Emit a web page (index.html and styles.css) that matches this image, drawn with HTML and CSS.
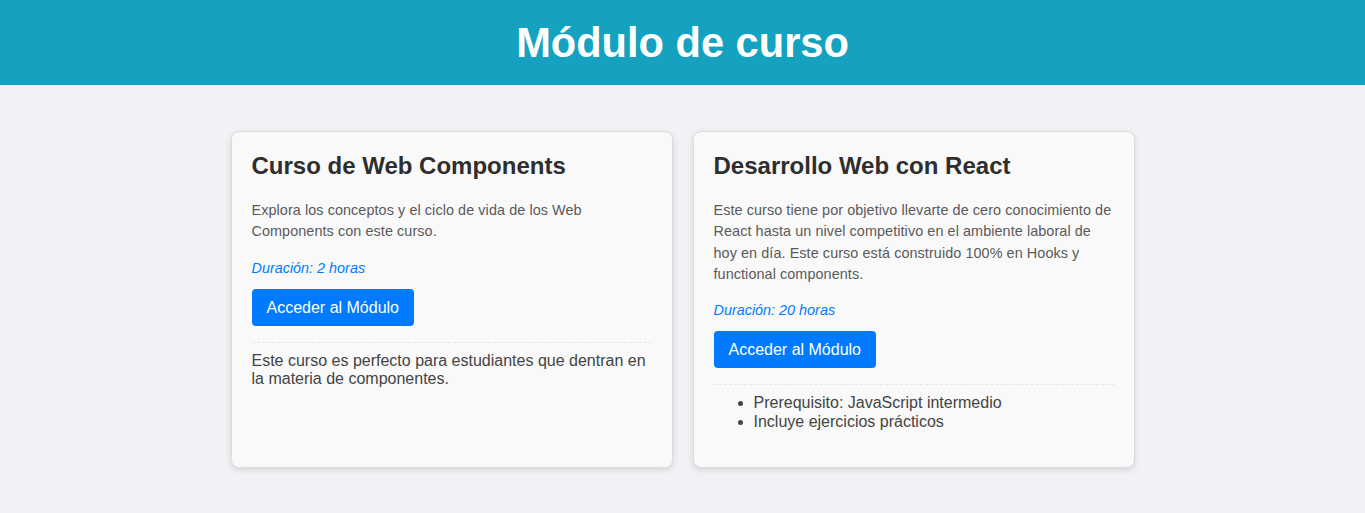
FILE: index.html
```html
<!DOCTYPE html>
<html lang="es">
<head>
<meta charset="utf-8">
<title>Módulo de curso</title>
<link rel="stylesheet" href="styles.css">
</head>
<body>
<header class="header">
  <h1 class="header-title">Módulo de curso</h1>
</header>
<main class="courses">
  <article class="card">
    <h2 class="card-title">Curso de Web Components</h2>
    <p class="card-desc">Explora los conceptos y el ciclo de vida de los Web Components con este curso.</p>
    <p class="card-duration">Duración: 2 horas</p>
    <button class="card-btn" type="button">Acceder al Módulo</button>
    <div class="card-extra">
      <p class="extra-text">Este curso es perfecto para estudiantes que dentran en la materia de componentes.</p>
    </div>
  </article>
  <article class="card">
    <h2 class="card-title">Desarrollo Web con React</h2>
    <p class="card-desc">Este curso tiene por objetivo llevarte de cero conocimiento de React hasta un nivel competitivo en el ambiente laboral de hoy en día. Este curso está construido 100% en Hooks y functional components.</p>
    <p class="card-duration">Duración: 20 horas</p>
    <button class="card-btn" type="button">Acceder al Módulo</button>
    <div class="card-extra">
      <ul class="extra-list">
        <li>Prerequisito: JavaScript intermedio</li>
        <li>Incluye ejercicios prácticos</li>
      </ul>
    </div>
  </article>
</main>
</body>
</html>
```
FILE: styles.css
```css
* { box-sizing: content-box; }
body {
  margin: 0;
  background: #f0f2f5;
  font-family: "Liberation Sans", Arial, sans-serif;
  color: #333;
}
.header {
  background: #14a2c0;
  padding: 18px 0;
  text-align: center;
}
.header-title {
  margin: 0;
  font-size: 41.6px;
  line-height: 49px;
  font-weight: bold;
  color: #fff;
}
.courses {
  display: flex;
  justify-content: center;
  align-items: stretch;
  gap: 20px;
  padding: 46px 0 20px;
}
.card {
  width: 400px;
  padding: 20px;
  background: #f9f9f9;
  border: 1px solid #dddddd;
  border-radius: 8px;
  box-shadow: 0 2px 6px rgba(0, 0, 0, 0.12);
}
.card-title {
  margin: 0 0 20px;
  font-size: 24px;
  font-weight: bold;
  color: #2e2e2e;
}
.card-desc {
  margin: 0 0 15px;
  font-size: 14.4px;
  letter-spacing: 0.08px;
  line-height: 21.3px;
  color: #5a5a5a;
}
.card-duration {
  margin: 0 0 10px;
  font-size: 14.4px;
  line-height: 21px;
  font-style: italic;
  color: #007bff;
}
.card-btn {
  display: inline-block;
  margin: 0;
  padding: 9px 15px;
  border: none;
  border-radius: 4px;
  background: #007bff;
  color: #fff;
  font-family: "Liberation Sans", Arial, sans-serif;
  font-size: 16px;
  line-height: 19px;
  cursor: pointer;
}
.card-extra {
  margin-top: 16px;
  padding-top: 9px;
  border-top: 1px dashed #e6e6e6;
  color: #444;
  font-size: 16px;
}
.extra-text {
  margin: 0;
  line-height: 18.4px;
}
.extra-list {
  margin: 0 0 16px;
  padding-left: 40px;
  line-height: 18.4px;
}
```
